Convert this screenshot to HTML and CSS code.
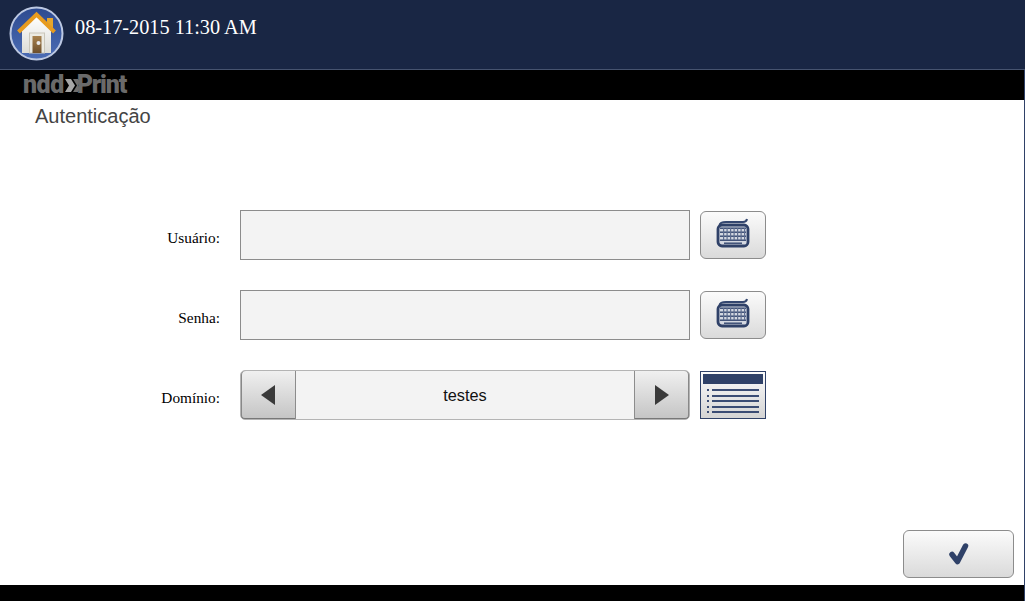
FILE: index.html
```html
<!DOCTYPE html>
<html lang="pt">
    <head>
        <meta charset="UTF-8">
        <title>Autenticação</title>
        <link rel="stylesheet" href="styles.css">
    </head>
    <body>
        <header class="top">
            <a class="home">
                <svg width="56" height="56" viewBox="0 0 56 56">
                    <defs>
                        <linearGradient id="disc" x1="0" y1="0" x2="0" y2="1">
                            <stop offset="0" stop-color="#2d4a90"/>
                            <stop offset="1" stop-color="#4c6db5"/>
                        </linearGradient>
                        <linearGradient id="wall" x1="0" y1="0" x2="0" y2="1">
                            <stop offset="0" stop-color="#ffffff"/>
                            <stop offset="1" stop-color="#dcdcd6"/>
                        </linearGradient>
                        <linearGradient id="door" x1="0" y1="0" x2="0" y2="1">
                            <stop offset="0" stop-color="#a8824e"/>
                            <stop offset="1" stop-color="#6d4f2c"/>
                        </linearGradient>
                    </defs>
                    <circle cx="27.500" cy="27.500" r="26" fill="url(#disc)" stroke="#bcc8e2" stroke-width="2"/>
                    <rect x="38" y="12" width="6" height="11" fill="#e6a62c"/>
                    <path d="M13 24 L27.500 10 L42 24 V47 H13z" fill="url(#wall)"/>
                    <path d="M9.500 26 L27.500 8.500 L45.500 26" fill="none" stroke="#e79b1f" stroke-width="4"/>
                    <rect x="20.500" y="27" width="15" height="20" fill="#ecebe3" stroke="#c9c6ba"/>
                    <rect x="23.500" y="30" width="9" height="17" fill="url(#door)"/>
                    <circle cx="29.500" cy="37" r="2" fill="#e8e8e8"/>
                </svg>
            </a>
            <span class="clock">08-17-2015 11:30 AM</span>
        </header>
        <div class="brand">
            <span class="logo"><span class="logo-ndd">ndd</span><svg class="logo-mark" width="15" height="15" viewBox="0 0 15 15"><path d="M0 1h6l4 6.500-4 6.500H0l4-6.500z" fill="#a6a6a6"/><path d="M8 1h5l2 3-2 3.500 2 3-2 3.500H8l4-6.500z" fill="#6e6e6e"/></svg><span class="logo-print">Print</span></span>
        </div>
        <main class="content">
            <h1 class="title">Autenticação</h1>
            <form class="login">
                <label class="field-label">Usuário:</label>
                <div class="input"></div>
                <button type="button" class="key-btn">
                    <svg width="36" height="30" viewBox="0 0 36 30"><use href="#keyboard"/></svg>
                </button>

                <label class="field-label">Senha:</label>
                <div class="input"></div>
                <button type="button" class="key-btn">
                    <svg width="36" height="30" viewBox="0 0 36 30"><use href="#keyboard"/></svg>
                </button>

                <label class="field-label">Domínio:</label>
                <div class="select">
                    <button type="button" class="arrow arrow-left"><i class="tri-left"></i></button>
                    <span class="select-value">testes</span>
                    <button type="button" class="arrow arrow-right"><i class="tri-right"></i></button>
                </div>
                <button type="button" class="list-btn">
                    <span class="list-head"></span>
                    <span class="list-row"></span>
                    <span class="list-row"></span>
                    <span class="list-row"></span>
                    <span class="list-row"></span>
                    <span class="list-row"></span>
                </button>
            </form>
            <div class="actions">
                <button type="button" class="ok">
                    <svg width="22" height="24" viewBox="0 0 22 24"><path d="M4 12.500 L9.500 19.500 L17.500 4" fill="none" stroke="#2f4168" stroke-width="5.500" stroke-linecap="round" stroke-linejoin="round"/></svg>
                </button>
            </div>
        </main>
        <footer class="bottom"></footer>

        <svg width="0" height="0" class="defs">
            <symbol id="keyboard" viewBox="0 0 36 30">
                <path d="M4.500 7 C5 4.500 7 4 11 4 H28 C30.500 4 31.500 3.500 32 1" fill="none" stroke="#33466f" stroke-width="2"/>
                <rect x="3" y="7" width="30" height="21" rx="4" fill="#d4d8e1" stroke="#2f4168" stroke-width="2.800"/>
                <g fill="#33466f">
                    <rect x="5" y="9.500" width="26" height="1.400"/>
                    <rect x="5" y="13.500" width="26" height="1.400"/>
                    <rect x="5" y="17.500" width="26" height="1.400"/>
                    <rect x="5" y="21.500" width="26" height="1.400"/>
                    <rect x="9" y="24.500" width="18" height="1.400"/>
                </g>
                <g fill="#5f6e90">
                    <rect x="8" y="10" width="1.200" height="12"/>
                    <rect x="11.500" y="10" width="1.200" height="12"/>
                    <rect x="15" y="10" width="1.200" height="12"/>
                    <rect x="18.500" y="10" width="1.200" height="12"/>
                    <rect x="22" y="10" width="1.200" height="12"/>
                    <rect x="25.500" y="10" width="1.200" height="12"/>
                    <rect x="29" y="10" width="1.200" height="12"/>
                </g>
            </symbol>
        </svg>
    </body>
</html>
```
FILE: styles.css
```css
html, body {
    margin: 0;
    height: 100%;
}
body {
    display: flex;
    flex-direction: column;
    height: 601px;
    overflow: hidden;
    background-color: #fff;
    font-family: "Liberation Serif", serif;
}
button {
    padding: 0;
    margin: 0;
}
.defs {
    display: none;
}

/* top bar */
.top {
    display: flex;
    align-items: flex-start;
    gap: 10px;
    height: 69px;
    padding-left: 9px;
    background-color: #192644;
    border-bottom: 1px solid #46536f;
}
.home {
    display: block;
    width: 56px;
    height: 56px;
    margin-top: 6px;
}
.clock {
    margin-top: 15px;
    color: #fff;
    font-size: 20.3px;
    line-height: 24px;
}

/* brand strip */
.brand {
    display: flex;
    align-items: center;
    height: 30px;
    padding-left: 23px;
    background-color: #000;
    border-right: 1px solid #2f4168;
}
.logo {
    display: flex;
    align-items: center;
    color: #6a6a6a;
    font-family: Roboto, sans-serif;
    font-weight: 900;
    font-size: 25px;
    line-height: 28px;
}
.logo-ndd {
    letter-spacing: -0.5px;
}
.logo-print {
    letter-spacing: -1.2px;
    margin-left: -3px;
}
.logo-mark {
    margin-left: 1px;
}

/* content */
.content {
    flex: 1;
    display: flex;
    flex-direction: column;
    border-right: 1px solid #2f4168;
}
.title {
    margin: 4px 0 0 35px;
    color: #444;
    font-family: "Liberation Sans", sans-serif;
    font-size: 20px;
    font-weight: normal;
    line-height: 24px;
}
.login {
    display: grid;
    grid-template-columns: 240px 460px 66px;
    grid-auto-rows: 50px;
    row-gap: 30px;
    margin-top: 82px;
}
.field-label {
    align-self: center;
    padding: 6px 20px 0 0;
    text-align: right;
    color: #000;
    font-size: 15.3px;
}
.input, .select {
    margin-right: 10px;
}
.input {
    box-sizing: border-box;
    height: 50px;
    border: 1px solid #8c8c8c;
    background-color: #f3f3f3;
}
.key-btn {
    display: flex;
    align-items: center;
    justify-content: center;
    box-sizing: border-box;
    width: 66px;
    height: 48px;
    margin-top: 1px;
    padding-bottom: 4px;
    border: 1px solid #8c8c8c;
    border-radius: 6px;
    background: linear-gradient(#fbfbfb, #dadada);
}

/* domain selector */
.select {
    display: flex;
    box-sizing: border-box;
    height: 50px;
    border: 1px solid #b4b4b4;
    border-radius: 5px;
    background-color: #f3f3f3;
}
.select-value {
    flex: 1;
    text-align: center;
    font-family: "Liberation Sans", sans-serif;
    font-size: 16.3px;
    line-height: 48px;
    color: #111;
}
.arrow {
    display: flex;
    align-items: center;
    justify-content: center;
    width: 55px;
    height: 48px;
    border: 0;
    background: linear-gradient(#f0f0f0, #c4c4c4);
}
.arrow-left {
    border-right: 1px solid #8c8c8c;
    border-radius: 4px 0 0 4px;
    box-shadow: inset 0 -1px 0 #777, inset 1px 0 0 #888;
}
.arrow-right {
    border-left: 1px solid #8c8c8c;
    border-radius: 0 4px 4px 0;
    box-shadow: inset 0 -1px 0 #777, inset -1px 0 0 #888;
}
.tri-left, .tri-right {
    width: 0;
    height: 0;
    border-top: 10px solid transparent;
    border-bottom: 10px solid transparent;
}
.tri-left {
    border-right: 14px solid #3a3a3a;
}
.tri-right {
    border-left: 14px solid #3a3a3a;
}
.list-btn {
    display: flex;
    flex-direction: column;
    gap: 3.5px;
    box-sizing: border-box;
    width: 66px;
    height: 48px;
    margin-top: 1px;
    padding: 2px 2px 0;
    border: 1px solid #2f4168;
    background: linear-gradient(#fbfbfb, #d4d4d4);
}
.list-head {
    flex: none;
    width: 100%;
    height: 10px;
    margin-bottom: 1.5px;
    background-color: #2f4168;
}
.list-row {
    position: relative;
    flex: none;
    align-self: stretch;
    height: 2px;
    margin: 0 4px 0 9px;
    background-color: #3a4c74;
}
.list-row::before {
    content: "";
    position: absolute;
    left: -5px;
    width: 2px;
    height: 2px;
    background-color: #3a4c74;
}

/* bottom */
.actions {
    display: flex;
    justify-content: flex-end;
    margin-top: auto;
    padding: 0 10px 7px 0;
}
.ok {
    display: flex;
    align-items: center;
    justify-content: center;
    box-sizing: border-box;
    width: 111px;
    height: 48px;
    border: 1px solid #8c8c8c;
    border-radius: 6px;
    background: linear-gradient(#fbfbfb, #dadada);
}
.bottom {
    height: 16px;
    background-color: #000;
    border-right: 1px solid #2f4168;
}
```
